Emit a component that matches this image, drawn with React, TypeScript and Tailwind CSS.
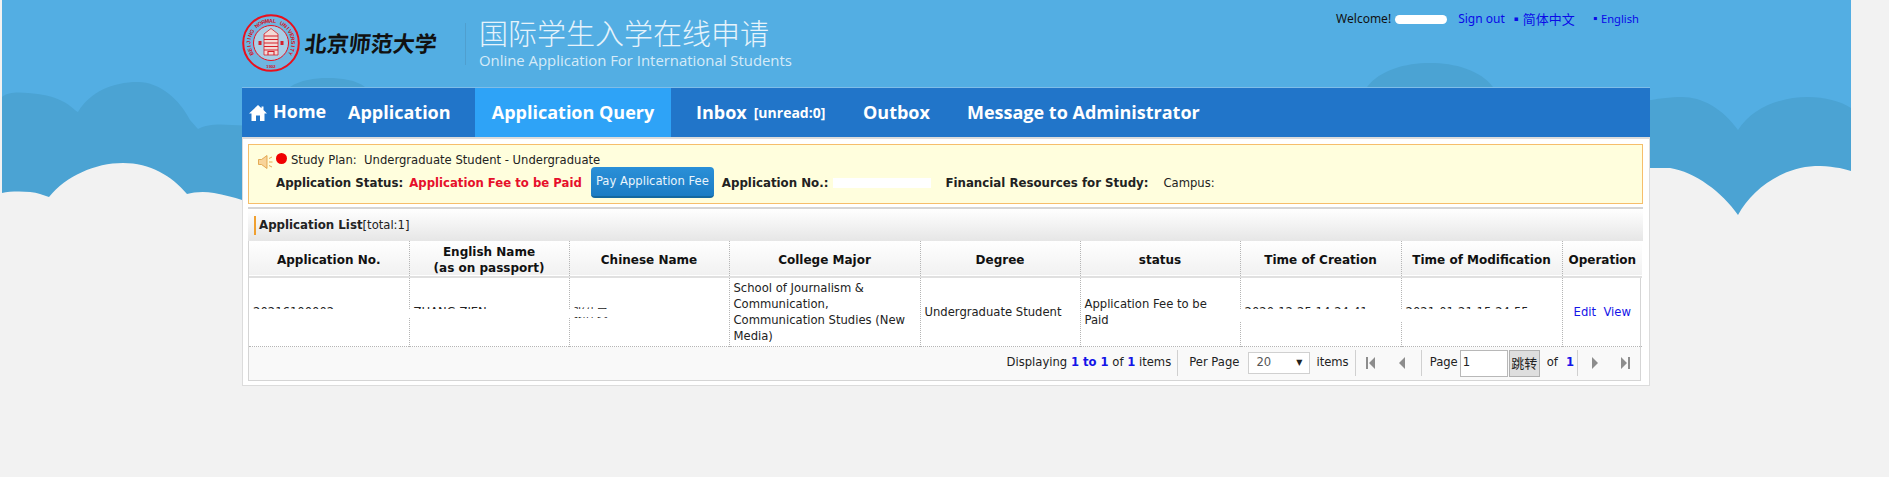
import React from "react";

const font = { fontFamily: '"DejaVu Sans", "Noto Sans CJK SC", sans-serif' };

function Backdrop() {
  return (
    <svg className="absolute left-0 top-0" width="1889" height="260" viewBox="0 0 1889 260">
      <rect x="2" y="0" width="1849" height="218" fill="#53aee3" />
      <path
        d="M2 97 C8 92 18 92 28 93 C42 94 52 96 62 101 C72 106 74 110 78 112 C90 92 112 82 138 82 C160 82 180 100 190 120 L198 129 C208 124 218 124 232 125 L300 128 L300 240 L2 240 Z"
        fill="#4ba3d3"
      />
      <path d="M290 87 C300 80 315 78 327 78 C342 78 356 80 365 87 Z" fill="#4ba3d3" />
      <path d="M1367 87 C1380 70 1405 63 1430 63 C1455 63 1480 70 1493 87 Z" fill="#4ba3d3" />
      <path
        d="M1600 112 C1625 104 1660 97 1682 97 C1702 97 1722 108 1738 130 C1752 108 1780 97 1808 97 C1825 97 1840 101 1851 108 L1851 218 L1600 218 Z"
        fill="#4ba3d3"
      />
      <path
        d="M2 193 C12 191 30 191 40 194 L49 197 C66 176 95 163 123 163 C150 163 172 176 187 194 C194 192 204 191 214 193 C224 195 234 197 242 200 L300 240 L2 240 Z"
        fill="#f2f2f2"
      />
      <path
        d="M1600 170 C1625 168 1650 168 1670 168 C1695 172 1722 192 1738 215 C1752 190 1780 168 1815 166 C1830 166 1842 168 1851 171 L1889 171 L1889 260 L1600 260 Z"
        fill="#f2f2f2"
      />
    </svg>
  );
}

function Seal() {
  const letters = "BEIJING NORMAL UNIVERSITY".split("");
  const start = -118;
  const step = 236 / (letters.length - 1);
  return (
    <svg width="58" height="58" viewBox="0 0 58 58" className="shrink-0">
      <circle cx="29" cy="29" r="27.8" fill="#6fb6e0" stroke="#ea0f1c" strokeWidth="2" />
      <circle cx="29" cy="29" r="17.5" fill="#a9cfe6" stroke="#ea0f1c" strokeWidth="1" />
      {letters.map((c, i) => (
        <text
          key={i}
          x="29"
          y="8.6"
          fill="#d80c18"
          fontSize="5.4"
          fontWeight="700"
          textAnchor="middle"
          fontFamily="Liberation Sans, sans-serif"
          transform={`rotate(${start + i * step} 29 29)`}
        >
          {c}
        </text>
      ))}
      <text x="29" y="53.5" fill="#d80c18" fontSize="4.2" fontWeight="700" textAnchor="middle" fontFamily="Liberation Sans, sans-serif">1902</text>
      <path d="M29 14.5 L36 20 V41 H22 V20 Z" fill="#f3d9d6" stroke="#d5202a" strokeWidth="0.8" />
      <path d="M22 22 H36 M22 25.5 H36 M22 29 H36 M22 32.5 H36 M22 36 H36 M26 41 V37.5 H32 V41" stroke="#d5202a" strokeWidth="1.1" fill="none" />
      <rect x="16.5" y="27" width="3" height="4" fill="#d5202a" />
      <rect x="38.5" y="27" width="3" height="4" fill="#d5202a" />
    </svg>
  );
}

function Home() {
  return (
    <svg width="18" height="18" viewBox="0 0 18 18" className="mt-[4px] shrink-0" fill="#fff">
      <path d="M9 1 L12.5 4.2 V2.5 H14.5 V6 L18 9.5 H15.5 V17 H11 V11.5 H7 V17 H2.5 V9.5 H0 Z" />
    </svg>
  );
}

function Speaker() {
  return (
    <svg width="15" height="14" viewBox="0 0 15 14" className="mt-[5px] shrink-0">
      <path d="M0.5 4.5 H3.5 L9 0.5 V13.5 L3.5 9.5 H0.5 Z" fill="#f8d49a" stroke="#dd9a3b" strokeWidth="0.8" />
      <path d="M11 3.5 L14 2 M11 7 H14.5 M11 10.5 L14 12" stroke="#e8a94e" strokeWidth="1" fill="none" />
    </svg>
  );
}

function Pager({ kind }: { kind: "first" | "prev" | "next" | "last" }) {
  const paths = {
    first: "M1 1 H3 V13 H1 Z M10 1 V13 L4 7 Z",
    prev: "M9 1 V13 L3 7 Z",
    next: "M3 1 V13 L9 7 Z",
    last: "M9 1 H11 V13 H9 Z M2 1 V13 L8 7 Z",
  };
  return (
    <svg width="12" height="14" viewBox="0 0 12 14" className="block shrink-0">
      <path d={paths[kind]} fill="#8d8d8d" />
    </svg>
  );
}

const headers: [string, number][] = [
  ["Application No.", 160],
  ["English Name|(as on passport)", 160],
  ["Chinese Name", 160],
  ["College Major", 191],
  ["Degree", 160],
  ["status", 160],
  ["Time of Creation", 161],
  ["Time of Modification", 161],
  ["Operation", 80],
];

export default function App() {
  return (
    <div className="relative min-h-[477px] overflow-hidden bg-[#f2f2f2] text-[11.6px] text-[#222]" style={font}>
      <Backdrop />
      <div className="relative ml-[242px] w-[1408px]">
        <header className="flex h-[87px] items-start justify-between">
          <div className="flex items-start pt-[14px]">
            <Seal />
            <span className="ml-[5px] mt-[13px] w-[136px] -skew-x-6 whitespace-nowrap text-[22px] font-bold leading-[30px] text-[#111]" style={{ fontFamily: '"Noto Sans CJK SC", sans-serif' }}>
              北京师范大学
            </span>
            <div className="ml-[24px] mt-[9px] h-[42px] w-px bg-[#4f9fcf]" />
            <div className="ml-[13px] mt-0">
              <div className="whitespace-nowrap text-[29px] font-light leading-[36px] text-[#e6f3fb]" style={{ fontFamily: '"Noto Sans CJK SC", sans-serif' }}>
                国际学生入学在线申请
              </div>
              <div className="whitespace-nowrap text-[14.9px] leading-[20px] text-[#d6ebf8]" style={{ fontFamily: '"Open Sans", sans-serif' }}>
                Online Application For International Students
              </div>
            </div>
          </div>
          <div className="relative mr-[11px] mt-[12px] flex items-center whitespace-nowrap text-[12px] leading-[14px]" style={{ fontFamily: '"Noto Sans", "Noto Sans CJK SC", sans-serif' }}>
            <span className="text-[#111]">Welcome!</span>
            <span className="ml-[4px] h-[9px] w-[52px] rounded-full bg-white" />
            <a className="ml-[11px] text-[#0a0ae8]">Sign out</a>
            <a className="ml-[5px] text-[13px] text-[#0a0ae8]">▪简体中文</a>
            <a className="ml-[15px] text-[11.2px] text-[#0a0ae8]">▪English</a>
          </div>
        </header>

        <nav className="flex h-[50px] items-stretch border-t border-[#7fbde8] bg-[#2175c9] text-[18px] font-bold text-white" style={{ fontFamily: '"Open Sans", sans-serif' }}>
          <div className="ml-[7px] flex w-[76px] items-center gap-[6px] pb-[3px]">
            <Home />
            <span>Home</span>
          </div>
          <span className="ml-[23px] flex w-[101px] items-center">Application</span>
          <span className="ml-[26px] flex w-[196px] items-center justify-center bg-[#2ea3f7]">Application Query</span>
          <span className="ml-[25px] flex w-[128px] items-center whitespace-nowrap">
            Inbox<span className="ml-[7px] text-[14px]">[unread:0]</span>
          </span>
          <span className="ml-[39px] flex w-[66px] items-center">Outbox</span>
          <span className="ml-[38px] flex items-center whitespace-nowrap">Message to Administrator</span>
        </nav>

        <main className="h-[249px] border border-t-[2px] border-[#dcdcdc] bg-white pl-[5px] pr-[6px] pt-[5px]">
          <section className="h-[60px] border border-[#f6be6b] bg-[#fffedd] px-[9px]">
            <div className="flex h-[22px] items-start pt-[5px]">
              <Speaker />
              <span className="ml-[3px] mt-[3px] h-[11px] w-[11px] rounded-full bg-[#f00000]" />
              <span className="ml-[4px] mt-[3px] whitespace-pre leading-[14px]">Study Plan:  Undergraduate Student - Undergraduate</span>
            </div>
            <div className="ml-[18px] flex h-[31px] items-center whitespace-nowrap">
              <b className="mt-[2px] text-[11.8px]">Application Status:</b>
              <b className="ml-[6px] mt-[2px] text-[11.7px] font-semibold text-[#e6102b]">Application Fee to be Paid</b>
              <button className="ml-[9px] h-[31px] w-[123px] rounded-[4px] border-b-2 border-[#14689f] bg-gradient-to-b from-[#2a90d8] to-[#1c7cc4] text-[11.6px] text-[#eaf5fc]">
                Pay Application Fee
              </button>
              <b className="ml-[8px] mt-[2px] text-[11.8px]">Application No.:</b>
              <span className="ml-[5px] h-[10px] w-[98px] bg-white" />
              <b className="ml-[14px] mt-[2px] text-[11.8px]">Financial Resources for Study:</b>
              <span className="ml-[15px] mt-[2px]">Campus:</span>
            </div>
          </section>

          <section className="mt-[3px] flex h-[34px] items-center border-t-2 border-[#d5d5d5] bg-gradient-to-b from-white to-[#e6e6e6] pl-[6px]">
            <span className="h-[19px] w-[2px] bg-[#f0a030]" />
            <b className="ml-[3px] mt-[2px] text-[11.8px]">Application List</b>
            <span className="mt-[2px]">[total:1]</span>
          </section>

          <div className="relative w-[1393px] border-x border-b border-[#d5d5d5]">
            <table className="w-full table-fixed border-collapse">
              <colgroup>
                {headers.map(([h, w]) => (
                  <col key={h} style={{ width: w }} />
                ))}
              </colgroup>
              <thead>
                <tr className="h-[36px] border-b-2 border-[#e0e0e0] bg-gradient-to-b from-white to-[#f1f1f1]">
                  {headers.map(([h]) => (
                    <th key={h} className="border-r border-dotted border-[#b5b5b5] p-0 pt-[2px] text-center text-[12px] font-bold leading-[16px] text-[#111] last:border-r-0">
                      {h.split("|").map((l) => (
                        <div key={l}>{l}</div>
                      ))}
                    </th>
                  ))}
                </tr>
              </thead>
              <tbody>
                <tr className="h-[69px] border-b border-dotted border-[#b5b5b5] leading-[16px]">
                  <td className="border-r border-dotted border-[#b5b5b5] px-[4px]">20216100002</td>
                  <td className="border-r border-dotted border-[#b5b5b5] px-[4px]">ZHANG ZIEN</td>
                  <td className="border-r border-dotted border-[#b5b5b5] px-[4px]" style={{ fontFamily: '"Noto Sans CJK SC", sans-serif' }}>张伟民</td>
                  <td className="border-r border-dotted border-[#b5b5b5] px-[4px]">School of Journalism &amp; Communication, Communication Studies (New Media)</td>
                  <td className="border-r border-dotted border-[#b5b5b5] px-[4px]">Undergraduate Student</td>
                  <td className="border-r border-dotted border-[#b5b5b5] pl-[4px] pr-[20px]">Application Fee to be Paid</td>
                  <td className="border-r border-dotted border-[#b5b5b5] px-[4px] whitespace-nowrap">2020-12-25 14:24:41</td>
                  <td className="border-r border-dotted border-[#b5b5b5] px-[4px] whitespace-nowrap">2021-01-21 15:24:55</td>
                  <td className="px-[4px] text-center whitespace-nowrap text-[#1414e8]">Edit&nbsp; View</td>
                </tr>
              </tbody>
            </table>
            <div className="absolute left-0 top-[68px] h-[8px] w-[480px] bg-white" />
            <div className="absolute left-[991px] top-[68px] h-[13px] w-[322px] bg-white" />
            <div className="flex h-[33px] items-center justify-end whitespace-nowrap bg-[#f9f9f9] pr-[9px]">
              <span>Displaying <b className="text-[#1414e8]">1 to 1</b> of <b className="text-[#1414e8]">1</b> items</span>
              <span className="ml-[6px] mr-[7px] h-[26px] w-px bg-[#d0d0d0]" />
              <span className="ml-[4px]">Per Page</span>
              <span className="ml-[9px] flex h-[22px] w-[62px] items-center justify-between border border-[#d0d0d0] bg-white px-[7px] text-[#555]">
                20<span className="text-[8px] text-[#222]">▼</span>
              </span>
              <span className="ml-[6px]">items</span>
              <span className="ml-[6px] mr-[7px] h-[26px] w-px bg-[#d0d0d0]" />
              <span className="ml-[2px]"><Pager kind="first" /></span>
              <span className="ml-[19px]"><Pager kind="prev" /></span>
              <span className="ml-[13px] h-[26px] w-px bg-[#d0d0d0]" />
              <span className="ml-[8px]">Page</span>
              <span className="ml-[2px] flex h-[27px] w-[48px] items-center border border-[#b8b8b8] bg-white px-[2px]">1</span>
              <span className="ml-[1px] flex h-[27px] w-[31px] items-center justify-center border border-[#b0b0b0] bg-[#dedede] text-[13px]" style={{ fontFamily: '"Noto Sans CJK SC", sans-serif' }}>跳转</span>
              <span className="ml-[7px]">of</span>
              <b className="ml-[8px] text-[#1414e8]">1</b>
              <span className="ml-[3px] h-[26px] w-px bg-[#d0d0d0]" />
              <span className="ml-[11px]"><Pager kind="next" /></span>
              <span className="ml-[18px]"><Pager kind="last" /></span>
            </div>
          </div>
        </main>
      </div>
    </div>
  );
}
